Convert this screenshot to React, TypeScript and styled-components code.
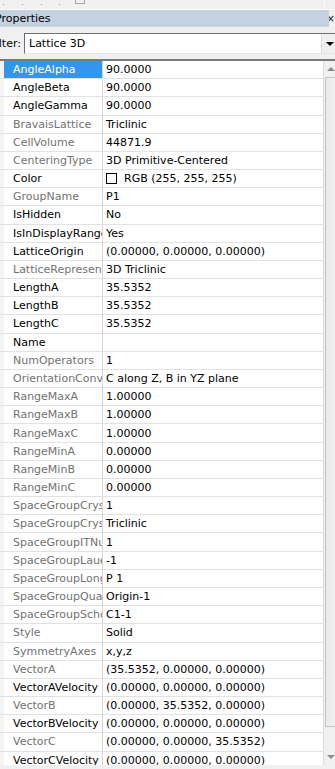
import React from "react";
import styled, { createGlobalStyle } from "styled-components";

const GlobalStyle = createGlobalStyle`
  html, body {
    margin: 0;
    padding: 0;
    background: #f0f0f0;
  }
  body {
    font-family: "DejaVu Sans", Tahoma, sans-serif;
    font-size: 11px;
    color: #000;
  }
`;

const Panel = styled.div`
  width: 335px;
  height: 769px;
  overflow: hidden;
  display: flex;
  flex-direction: column;
  background: #f0f0f0;
`;

const ToolStrip = styled.div`
  height: 9px;
  display: flex;
  align-items: flex-start;
  border-bottom: 1px solid #fbfbfb;
`;

const Grip = styled.span<{ $w: number }>`
  width: ${(p) => p.$w}px;
  height: 9px;
  background-image: linear-gradient(#9a9a9a, #9a9a9a);
  background-size: 1px 1px;
  background-repeat: no-repeat;
  background-position: left 3px top 4px;
`;

const ToolBox = styled.span`
  width: 10px;
  height: 4px;
  box-sizing: border-box;
  border: 1px solid #a8a8a8;
  border-top: none;
  margin-left: 2px;
`;

const StripEdge = styled.span`
  margin-left: auto;
  width: 10px;
  height: 9px;
  border-left: 1px solid #fafafa;
`;

const TitleBar = styled.div`
  height: 17px;
  display: flex;
  align-items: stretch;
`;

const Caption = styled.div`
  flex: 1;
  background: #c4d1de;
  display: flex;
  align-items: center;
  overflow: hidden;
  white-space: nowrap;
`;

const CaptionText = styled.span`
  margin-left: -5px;
  color: #000;
`;

const CloseGlyph = styled.div`
  width: 6px;
  display: flex;
  align-items: center;
  justify-content: flex-end;
  font-size: 10px;
  overflow: hidden;
  color: #222;
`;

const FilterRow = styled.div`
  height: 32px;
  display: flex;
  align-items: flex-start;
  padding-top: 6px;
  box-sizing: border-box;
`;

const FilterLabel = styled.div`
  width: 24px;
  flex: none;
  height: 21px;
  display: flex;
  align-items: center;
  justify-content: flex-end;
  padding-right: 3px;
  box-sizing: border-box;
  white-space: nowrap;
  overflow: hidden;
`;

const Combo = styled.div`
  flex: 1;
  height: 21px;
  display: flex;
  box-sizing: border-box;
  border-top: 1px solid #6f6f6f;
  border-left: 1px solid #6f6f6f;
  border-bottom: 1px solid #e4e4e4;
  background: #fff;
`;

const ComboText = styled.div`
  flex: 1;
  padding-left: 4px;
  display: flex;
  align-items: center;
`;

const ComboButton = styled.div`
  width: 11px;
  border-left: 1px solid #dcdcdc;
  background: #f0f0f0;
  display: flex;
  align-items: center;
  justify-content: center;
  padding-left: 2px;
`;

const Arrow = styled.span<{ $up?: boolean; $color: string }>`
  width: 0;
  height: 0;
  border-left: 4px solid transparent;
  border-right: 4px solid transparent;
  ${(p) =>
    p.$up
      ? `border-bottom: 4px solid ${p.$color};`
      : `border-top: 4px solid ${p.$color};`}
`;

const GridFrame = styled.div`
  border-top: 2px solid #7a7a7a;
  height: 704px;
  display: flex;
  overflow: hidden;
  background: #fff;
`;

const Rows = styled.div`
  flex: 1;
  overflow: hidden;
  border-right: 1px solid #dcdcdc;
`;

const Row = styled.div`
  height: 18.18px;
  box-sizing: border-box;
  display: flex;
  border-bottom: 1px solid #e2e2e2;
`;

const Gutter = styled.div`
  width: 4px;
  flex: none;
  background: #f4f4f4;
`;

const NameCell = styled.div<{ $muted: boolean; $selected: boolean }>`
  width: 99px;
  flex: none;
  box-sizing: border-box;
  padding-left: 9px;
  display: flex;
  align-items: center;
  white-space: nowrap;
  overflow: hidden;
  border-right: 1px solid #d6d6d6;
  background: ${(p) => (p.$selected ? "#3396ea" : "#fff")};
  color: ${(p) => (p.$selected ? "#fff" : p.$muted ? "#727272" : "#000")};
`;

const ValueCell = styled.div`
  flex: 1;
  padding-left: 3px;
  display: flex;
  align-items: center;
  gap: 7px;
  white-space: nowrap;
  overflow: hidden;
`;

const Swatch = styled.span`
  width: 11px;
  height: 11px;
  box-sizing: border-box;
  border: 1px solid #000;
  background: #fff;
`;

const ScrollBar = styled.div`
  width: 11px;
  flex: none;
  background: #f0f0f0;
  display: flex;
  flex-direction: column;
  align-items: flex-end;
`;

const ScrollArrow = styled.div`
  height: 16px;
  width: 11px;
  display: flex;
  align-items: center;
  justify-content: center;
  padding-left: 3px;
  box-sizing: border-box;
`;

const Thumb = styled.div`
  height: 650px;
  width: 10px;
  box-sizing: border-box;
  border: 1px solid #c6c6c6;
  border-right: none;
  background: linear-gradient(to right, #e9e9e9, #f1f1f1);
`;

const Track = styled.div`
  flex: 1;
`;

const Footer = styled.div`
  flex: 1;
  background: #f0f0f0;
`;

type Prop = {
  name: string;
  value: string;
  muted?: boolean;
  swatch?: boolean;
};

const props: Prop[] = [
  { name: "AngleAlpha", value: "90.0000" },
  { name: "AngleBeta", value: "90.0000" },
  { name: "AngleGamma", value: "90.0000" },
  { name: "BravaisLattice", value: "Triclinic", muted: true },
  { name: "CellVolume", value: "44871.9", muted: true },
  { name: "CenteringType", value: "3D Primitive-Centered", muted: true },
  { name: "Color", value: "RGB (255, 255, 255)", swatch: true },
  { name: "GroupName", value: "P1", muted: true },
  { name: "IsHidden", value: "No" },
  { name: "IsInDisplayRange", value: "Yes" },
  { name: "LatticeOrigin", value: "(0.00000, 0.00000, 0.00000)" },
  { name: "LatticeRepresentation", value: "3D Triclinic", muted: true },
  { name: "LengthA", value: "35.5352" },
  { name: "LengthB", value: "35.5352" },
  { name: "LengthC", value: "35.5352" },
  { name: "Name", value: "" },
  { name: "NumOperators", value: "1", muted: true },
  { name: "OrientationConvention", value: "C along Z, B in YZ plane", muted: true },
  { name: "RangeMaxA", value: "1.00000", muted: true },
  { name: "RangeMaxB", value: "1.00000", muted: true },
  { name: "RangeMaxC", value: "1.00000", muted: true },
  { name: "RangeMinA", value: "0.00000", muted: true },
  { name: "RangeMinB", value: "0.00000", muted: true },
  { name: "RangeMinC", value: "0.00000", muted: true },
  { name: "SpaceGroupCrystalClass", value: "1", muted: true },
  { name: "SpaceGroupCrystalSystem", value: "Triclinic", muted: true },
  { name: "SpaceGroupITNumber", value: "1", muted: true },
  { name: "SpaceGroupLaueClass", value: "-1", muted: true },
  { name: "SpaceGroupLongName", value: "P 1", muted: true },
  { name: "SpaceGroupQualifier", value: "Origin-1", muted: true },
  { name: "SpaceGroupSchoenfliesName", value: "C1-1", muted: true },
  { name: "Style", value: "Solid", muted: true },
  { name: "SymmetryAxes", value: "x,y,z", muted: true },
  { name: "VectorA", value: "(35.5352, 0.00000, 0.00000)", muted: true },
  { name: "VectorAVelocity", value: "(0.00000, 0.00000, 0.00000)" },
  { name: "VectorB", value: "(0.00000, 35.5352, 0.00000)", muted: true },
  { name: "VectorBVelocity", value: "(0.00000, 0.00000, 0.00000)" },
  { name: "VectorC", value: "(0.00000, 0.00000, 35.5352)", muted: true },
  { name: "VectorCVelocity", value: "(0.00000, 0.00000, 0.00000)" },
];

const App = () => {
  const selected = "AngleAlpha";

  return (
    <Panel>
      <GlobalStyle />
      <ToolStrip>
        <Grip $w={19} />
        <Grip $w={19} />
        <Grip $w={18} />
        <Grip $w={17} />
        <ToolBox />
        <StripEdge />
      </ToolStrip>

      <TitleBar>
        <Caption>
          <CaptionText>Properties</CaptionText>
        </Caption>
        <CloseGlyph>×</CloseGlyph>
      </TitleBar>

      <FilterRow>
        <FilterLabel>Filter:</FilterLabel>
        <Combo>
          <ComboText>Lattice 3D</ComboText>
          <ComboButton>
            <Arrow $color="#000" />
          </ComboButton>
        </Combo>
      </FilterRow>

      <GridFrame>
        <Rows>
          {props.map((p) => (
            <Row key={p.name}>
              <Gutter />
              <NameCell $muted={!!p.muted} $selected={p.name === selected}>
                {p.name}
              </NameCell>
              <ValueCell>
                {p.swatch && <Swatch />}
                {p.value}
              </ValueCell>
            </Row>
          ))}
        </Rows>
        <ScrollBar>
          <ScrollArrow>
            <Arrow $up $color="#8a8a8a" />
          </ScrollArrow>
          <Thumb />
          <Track />
          <ScrollArrow>
            <Arrow $color="#8a8a8a" />
          </ScrollArrow>
        </ScrollBar>
      </GridFrame>
      <Footer />
    </Panel>
  );
};

export default App;
